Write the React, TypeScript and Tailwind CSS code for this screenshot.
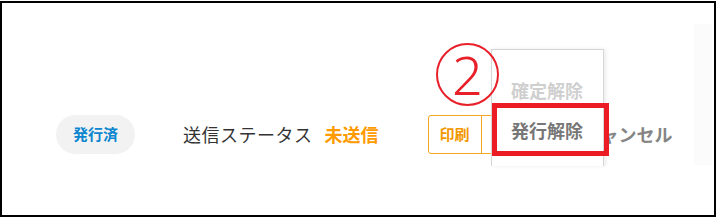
import React from 'react';

const jp = { fontFamily: '"Noto Sans CJK JP", "Noto Sans", sans-serif' };

export default function App() {
    return (
        <div className="w-[719px] h-[220px] bg-white pt-[1px]" style={jp}>
            <div className="relative w-[716px] h-[216px] border-2 border-black flex">
                <div className="w-[692px]">
                    <div className="mt-[112px] ml-[54px] h-[39px] flex items-center">
                        <div className="w-[79px] h-[39px] rounded-full bg-[#f2f2f2] flex items-center justify-center text-[15px] font-bold text-[#0b86cf]">
                            発行済
                        </div>
                        <span className="ml-[48px] text-[18px] text-[#333] tracking-[0.5px]">送信ステータス</span>
                        <span className="ml-[12px] text-[18px] font-bold text-[#ff9a00]">未送信</span>
                        <div className="ml-[49px] h-[39px] flex border border-[#f5a623] rounded-[3px]">
                            <div className="w-[53px] flex items-center justify-center text-[15px] font-bold text-[#f39800] border-r border-[#f5a623]">
                                印刷
                            </div>
                            <div className="w-[76px]" />
                        </div>
                        <span className="ml-[24px] text-[18px] font-semibold text-[#858585]">キャンセル</span>
                    </div>
                </div>
                <div className="mt-[21px] w-[18px] h-[141px] bg-[#fbfbfb]" />

                {/* dropdown menu */}
                <div className="absolute left-[489px] top-[46px] w-[113px] h-[117px] bg-white border-t border-x border-[#d6d6d6] shadow-[2px_0_4px_rgba(0,0,0,0.08)]">
                    <div className="pl-[19px] pt-[27px] h-[52px] text-[18px] font-bold text-[#cfcfcf] leading-[26px]">確定解除</div>
                    <div className="pl-[19px] pt-[15px] text-[18px] font-bold text-[#777] leading-[26px]">発行解除</div>
                </div>

                {/* annotations */}
                <div className="absolute left-[490px] top-[100px] w-[117px] h-[53px] border-[5px] border-[#ec1c24]" />
                <div className="absolute left-[434px] top-[40px] w-[63px] h-[63px] rounded-full border-2 border-[#e8202a] flex items-center justify-center">
                    <span className="text-[54px] leading-none font-light text-[#e8202a] -mt-[2px]" style={{ fontFamily: '"Noto Sans", sans-serif' }}>2</span>
                </div>
            </div>
        </div>
    );
}
